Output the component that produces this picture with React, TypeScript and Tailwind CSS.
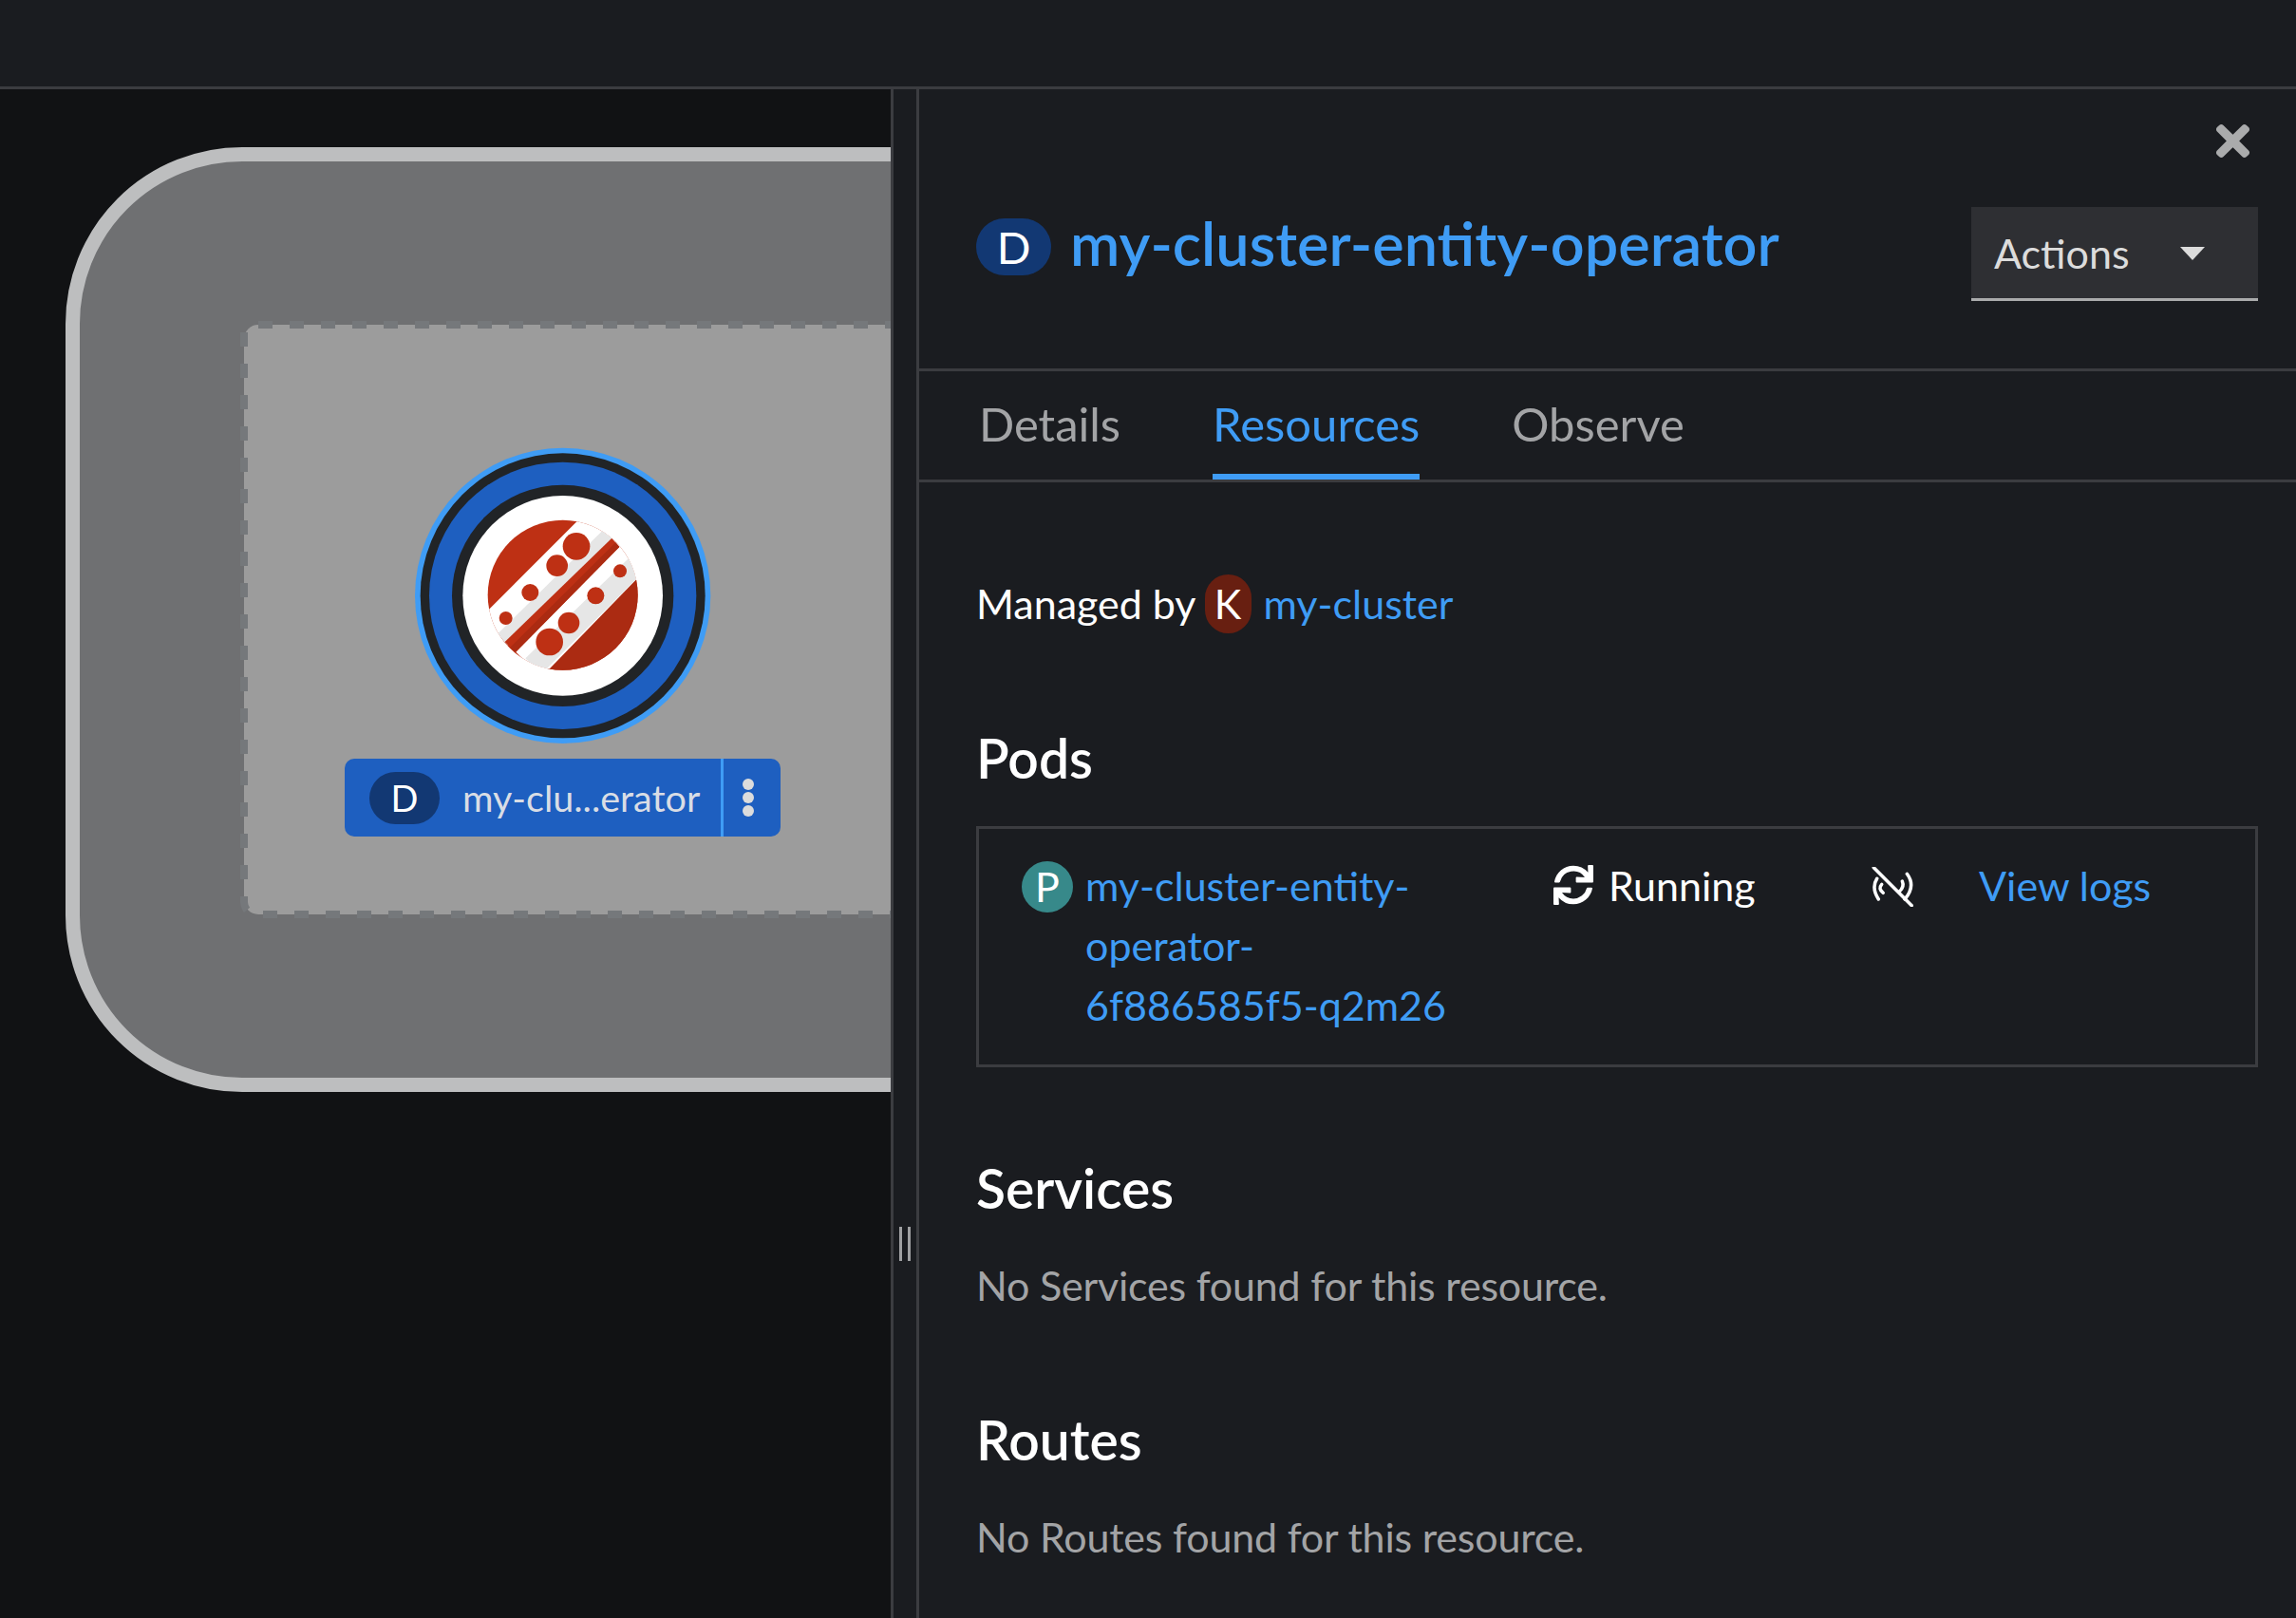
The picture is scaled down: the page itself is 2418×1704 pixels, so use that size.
import { FaSync, FaTimes } from 'react-icons/fa'

const font = '[font-family:Lato,sans-serif]'

function NodeLogo() {
  return (
    <svg viewBox="0 0 1050 1050" className="absolute left-[420px] top-[450px] h-[350px] w-[350px]">
      <defs>
        <clipPath id="logo-clip">
          <circle cx="518" cy="530" r="237" />
        </clipPath>
      </defs>
      <circle cx="518" cy="532" r="467" fill="#3f9cf5" />
      <circle cx="518" cy="532" r="450" fill="#212427" />
      <circle cx="518" cy="532" r="422" fill="#1e5fc0" />
      <circle cx="518" cy="532" r="350" fill="#212427" />
      <circle cx="518" cy="532" r="316" fill="#ffffff" />
      <g clipPath="url(#logo-clip)">
        <rect x="270" y="285" width="500" height="500" fill="#be3014" />
        <polygon points="770,460 770,790 440,790" fill="#ab2b12" />
        <polygon points="590,270 780,450 450,790 260,600" fill="#ffffff" />
        <polygon points="650,320 680,350 345,690 310,655" fill="#e6e6e6" />
        <polygon points="730,410 770,460 450,780 400,730" fill="#e6e6e6" />
        <polygon points="673,350 697,378 368,712 335,678" fill="#be3014" />
        <polygon points="685,364 697,378 368,712 352,695" fill="#ab2b12" />
      </g>
      <g fill="#be3014">
        <circle cx="561" cy="376" r="43" />
        <circle cx="500" cy="437" r="34" />
        <circle cx="415" cy="522" r="27" />
        <circle cx="338" cy="603" r="21" />
        <circle cx="699" cy="454" r="21" />
        <circle cx="622" cy="532" r="27" />
        <circle cx="537" cy="618" r="34" />
        <circle cx="476" cy="678" r="43" />
      </g>
    </svg>
  )
}

function Graph() {
  return (
    <div className="relative h-full w-[938px] overflow-hidden bg-[#111214]">
      {/* topology canvas, offset so the coordinates read as page pixels */}
      <div className="absolute left-0 top-[-94px] h-[1704px] w-[938px]">
        <div className="absolute left-[69px] top-[155px] h-[995px] w-[1200px] rounded-[186px] border-[15px] border-[#bdbebf] bg-[#6f7072]" />
        <svg className="absolute left-0 top-0 h-[1704px] w-[938px]" fill="none">
          <rect x="257" y="342" width="900" height="621" rx="15" fill="#9c9c9c" />
          <g stroke="#75787b" strokeWidth="8" strokeDasharray="15 18">
            <path d="M272 342 H1000" />
            <path d="M257 350 V950 A13 13 0 0 0 270 963" />
            <path d="M277 963 H1000" />
          </g>
        </svg>
        <NodeLogo />
        <div className="absolute left-[363px] top-[799px] flex h-[82px] w-[459px] items-center rounded-[10px] bg-[#1e5fc0]">
          <span className={`ml-[26px] flex h-[55px] w-[74px] items-center justify-center rounded-full bg-[#123873] text-[38px] text-white ${font}`}>D</span>
          <span className={`ml-[24px] w-[257px] text-[39.5px] text-[#d9dde5] ${font}`}>my-clu...erator</span>
          <span className="ml-[15px] h-full w-[3px] bg-[#3f9cf5]" />
          <span className="ml-[20px] flex flex-col gap-[2px]">
            <i className="block h-[12px] w-[12px] rounded-full bg-[#dcdcdc]" />
            <i className="block h-[12px] w-[12px] rounded-full bg-[#dcdcdc]" />
            <i className="block h-[12px] w-[12px] rounded-full bg-[#dcdcdc]" />
          </span>
        </div>
      </div>
    </div>
  )
}

function StreamOffIcon() {
  return (
    <svg viewBox="0 0 44 42" className="h-[42px] w-[44px]" fill="none" stroke="#ffffff" strokeWidth="3.5" strokeLinecap="round">
      <path d="M2.3 0.7 L42.3 40.7" />
      <path d="M5.7 12.3 Q-0.5 22 7.3 34" />
      <path d="M10.7 18.3 Q6.5 23 12.3 27.3" />
      <path d="M32.3 15 Q35 21 29 26.3" />
      <path d="M37.3 7.3 Q47 20 35 34" />
    </svg>
  )
}

function Section({ title, empty }: { title: string; empty: string }) {
  return (
    <div>
      <h2 className="text-[57px] font-semibold leading-[64px] text-white">{title}</h2>
      <p className="mt-[39px] text-[43px] leading-[64px] tracking-[-0.2px] text-[#a3a4a6]">{empty}</p>
    </div>
  )
}

export default function App() {
  return (
    <div className={`flex h-[1704px] w-[2418px] flex-col overflow-hidden bg-[#1a1c20] ${font}`}>
      <div className="h-[94px] border-b-[3px] border-[#3b3c40]" />
      <div className="flex min-h-0 flex-1">
        <Graph />
        <div className="flex w-[30px] items-center justify-center gap-[6px] border-x-[3px] border-[#3b3c40] pt-[822px]">
          <i className="block h-[36px] w-[3px] bg-[#a0a1a3]" />
          <i className="block h-[36px] w-[3px] bg-[#a0a1a3]" />
        </div>
        <div className="relative min-w-0 flex-1">
          <button className="absolute right-[41px] top-[29px] text-[#aaabac]">
            <FaTimes size={51} />
          </button>
          <div className="flex h-[297px] items-start border-b-[3px] border-[#3b3c40] pl-[60px] pr-[40px]">
            <div className="mt-[127px] flex items-start">
              <span className="mt-[9px] flex h-[60px] w-[79px] items-center justify-center rounded-full bg-[#123873] text-[47px] text-white">D</span>
              <h1 className="ml-[20px] text-[63px] font-semibold leading-[70px] text-[#3f9cf5]">my-cluster-entity-operator</h1>
            </div>
            <button className="ml-auto mt-[124px] flex h-[99px] w-[302px] items-center border-b-[3px] border-[#aaabac] bg-[#2e2f33] pl-[24px] pt-[2px] text-[43px] text-[#dcdcdc]">
              Actions
              <svg viewBox="0 0 26 14" className="ml-auto mr-[56px] h-[14px] w-[26px]"><path d="M0 0 H26 L13 14 Z" fill="#dcdcdc" /></svg>
            </button>
          </div>
          <div className="flex h-[117px] gap-[97px] border-b-[3px] border-[#3b3c40] pl-[63px] text-[49px]">
            <span className="flex items-center pb-[2px] text-[#a3a4a6]">Details</span>
            <span className="flex items-center border-b-[6px] border-[#3f9cf5] pt-[4px] text-[#3f9cf5]">Resources</span>
            <span className="flex items-center pb-[2px] text-[#a3a4a6]">Observe</span>
          </div>
          <div className="pl-[60px] pr-[40px]">
            <div className="mt-[96px] flex items-center text-[43px] text-white">
              <span>Managed by</span>
              <span className="ml-[9px] flex h-[62px] w-[49px] items-center justify-center rounded-full bg-[#681f11]">K</span>
              <span className="ml-[13px] text-[#3f9cf5]">my-cluster</span>
            </div>
            <h2 className="mt-[97px] text-[57px] font-semibold leading-[64px] text-white">Pods</h2>
            <div className="mt-[40px] flex h-[254px] border-[3px] border-[#3b3c40] pl-[45px] pt-[28px] text-[43px] leading-[63px]">
              <span className="mt-[6px] flex h-[54px] w-[54px] shrink-0 items-center justify-center rounded-full bg-[#37898a] text-white">P</span>
              <span className="ml-[13px] w-[493px] text-[#3f9cf5]">my-cluster-entity-<br />operator-<br />6f886585f5-q2m26</span>
              <span className="flex h-[63px] w-[335px] items-center text-white">
                <FaSync size={42} />
                <span className="ml-[16px]">Running</span>
              </span>
              <span className="mt-[2px] flex h-[63px] items-center"><StreamOffIcon /></span>
              <span className="ml-[69px] text-[#3f9cf5]">View logs</span>
            </div>
            <div className="mt-[95px] flex flex-col gap-[98px]">
              <Section title="Services" empty="No Services found for this resource." />
              <Section title="Routes" empty="No Routes found for this resource." />
            </div>
          </div>
        </div>
      </div>
    </div>
  )
}
